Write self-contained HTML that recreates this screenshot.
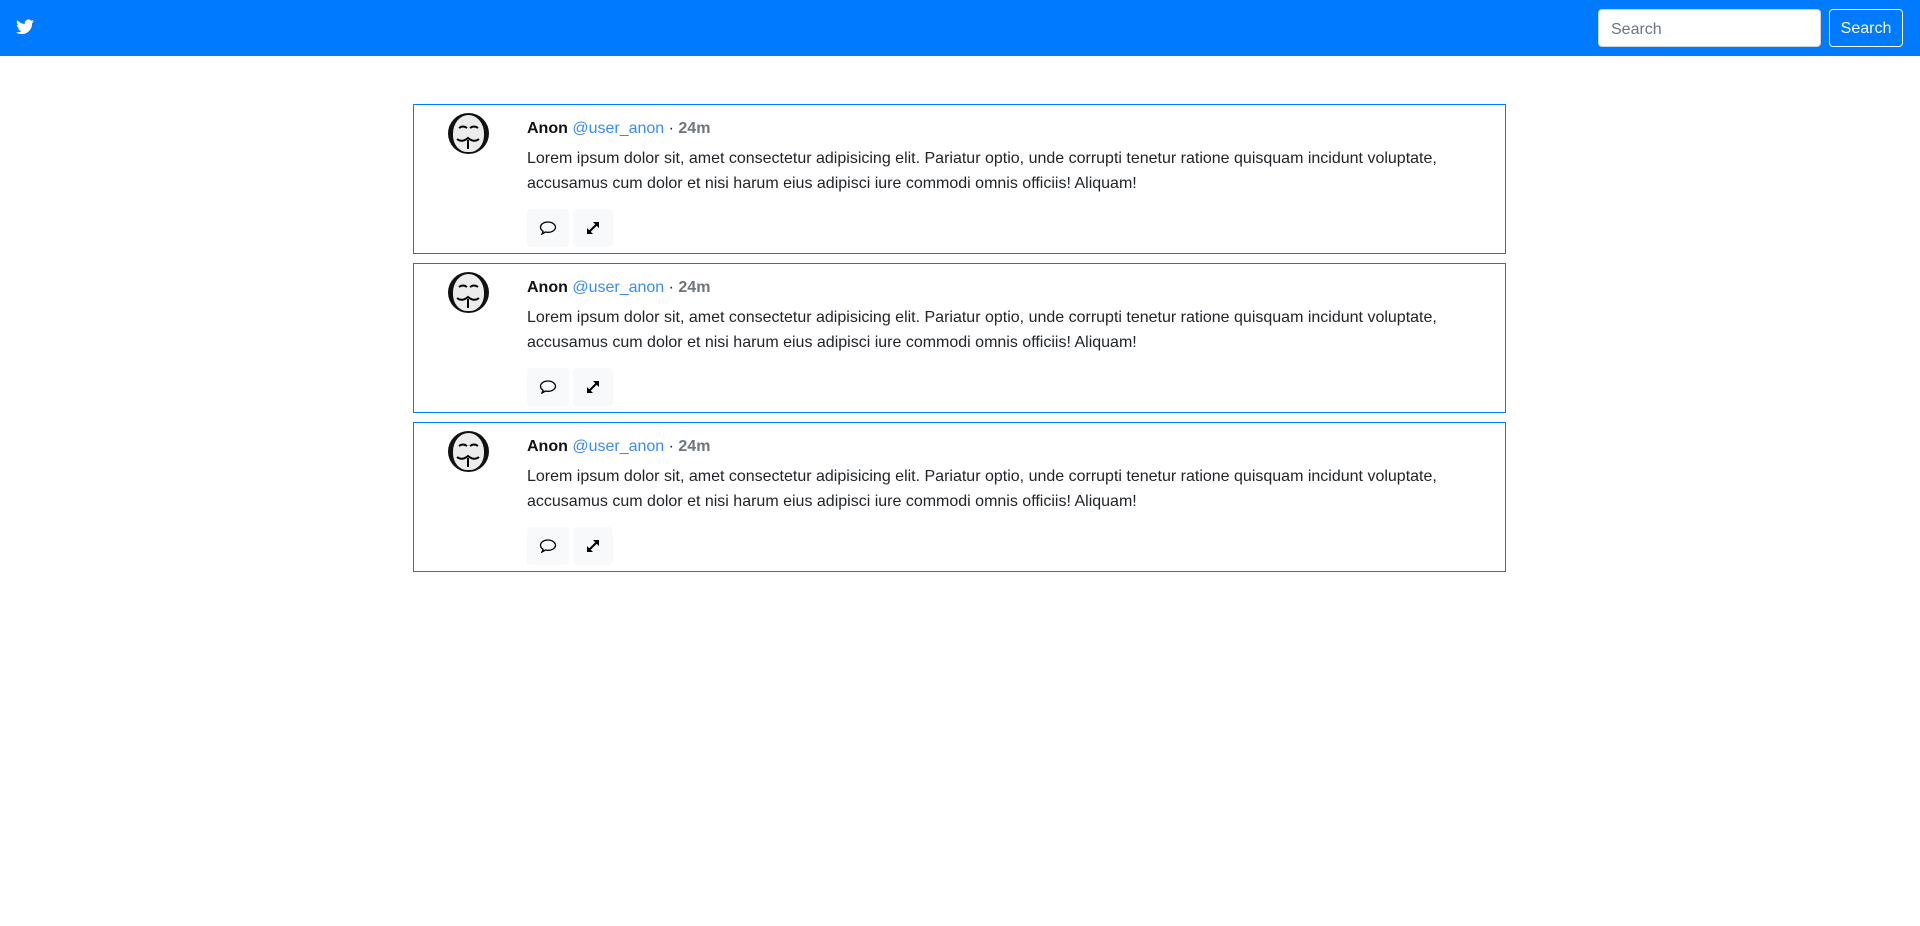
<!DOCTYPE html>
<html><head><meta charset="utf-8"><style>
*{box-sizing:border-box;margin:0;padding:0}
body{width:1920px;height:926px;background:#fff;font-family:"Liberation Sans",sans-serif;color:#212529;font-size:16px;overflow:hidden}
.nav{height:56px;background:#007bff;position:relative}
.logo{position:absolute;left:16px;top:19px}
.inp{position:absolute;left:1598px;top:9px;width:223px;height:38px;background:#fff;border:1px solid #ced4da;border-radius:4px;color:#6c757d;padding:10px 12px 0;font-size:16px;line-height:20px}
.btn{position:absolute;left:1829px;top:9px;width:74px;height:38px;border:1px solid #f8f9fa;border-radius:4px;color:#f8f9fa;text-align:center;line-height:38px;font-size:16px}
.card{position:absolute;left:413px;width:1093px;height:150px;border:1px solid #007bff}
.av{position:absolute;left:34px;top:8px;width:41px;height:41px;border-radius:50%;background:#111;overflow:hidden}
.av .f{position:absolute;left:5px;top:2px;width:31px;height:37px;background:#ececec;border-radius:50% 50% 45% 45%}
.body{position:absolute;left:113px;top:12px;width:960px}
.hd{font-size:16px;line-height:24px}
.hd b{color:#111}.hd .u{color:#3b8cf5}.hd .t{color:#6c757d;font-weight:bold}
.tx{margin-top:5px;line-height:25px;font-size:16px}
.acts{margin-top:13px;display:flex;gap:4px}
.ab{width:42px;height:38px;background:#f8f9fa;border-radius:4px;display:flex;align-items:center;justify-content:center}
.ab+.ab{width:40px}
</style></head><body>
<div class="nav">
<svg class="logo" width="18" height="16" viewBox="0 0 24 20"><path fill="#fff" d="M24 2.4a9.8 9.8 0 0 1-2.8.8A4.9 4.9 0 0 0 23.3.4a9.8 9.8 0 0 1-3.1 1.2A4.9 4.9 0 0 0 11.8 6 14 14 0 0 1 1.7.9a4.9 4.9 0 0 0 1.5 6.6 4.9 4.9 0 0 1-2.2-.6 4.9 4.9 0 0 0 3.9 4.9 4.9 4.9 0 0 1-2.2.1 4.9 4.9 0 0 0 4.6 3.4A9.9 9.9 0 0 1 0 17.3 14 14 0 0 0 7.5 19.5c9.1 0 14-7.5 14-14v-.6A10 10 0 0 0 24 2.4z"/></svg>
<div class="inp">Search</div>
<div class="btn">Search</div>
</div>
<div class="card" style="top:104px">
<div class="av"><div class="f"></div><svg style="position:absolute;left:0;top:0" width="41" height="41"><path d="M11 15q4-3 8 0M22 15q4-3 8 0" stroke="#000" stroke-width="2" fill="none"/><path d="M9 26q5 4 11-1q6 5 11 1" stroke="#000" stroke-width="2" fill="none"/><path d="M20 27v9" stroke="#000" stroke-width="2"/></svg></div>
<div class="body"><div class="hd"><b>Anon</b> <span class="u">@user_anon</span> · <span class="t">24m</span></div>
<div class="tx">Lorem ipsum dolor sit, amet consectetur adipisicing elit. Pariatur optio, unde corrupti tenetur ratione quisquam incidunt voluptate, accusamus cum dolor et nisi harum eius adipisci iure commodi omnis officiis! Aliquam!</div>
<div class="acts"><div class="ab"><svg width="18" height="14" viewBox="0 0 18 14"><path d="M9 1C4.5 1 1.5 3.5 1.5 6.3c0 1.6 1 3 2.6 4L3 13l3.5-2c.8.2 1.6.3 2.5.3 4.5 0 7.5-2.5 7.5-5S13.5 1 9 1z" fill="none" stroke="#000" stroke-width="1.3"/></svg></div><div class="ab"><svg width="14" height="14" viewBox="0 0 14 14"><path d="M3 11L11 3" stroke="#000" stroke-width="2"/><path d="M7 1h6v6zM1 7v6h6z" fill="#000"/></svg></div></div></div>
</div>
<div class="card" style="top:263px">
<div class="av"><div class="f"></div><svg style="position:absolute;left:0;top:0" width="41" height="41"><path d="M11 15q4-3 8 0M22 15q4-3 8 0" stroke="#000" stroke-width="2" fill="none"/><path d="M9 26q5 4 11-1q6 5 11 1" stroke="#000" stroke-width="2" fill="none"/><path d="M20 27v9" stroke="#000" stroke-width="2"/></svg></div>
<div class="body"><div class="hd"><b>Anon</b> <span class="u">@user_anon</span> · <span class="t">24m</span></div>
<div class="tx">Lorem ipsum dolor sit, amet consectetur adipisicing elit. Pariatur optio, unde corrupti tenetur ratione quisquam incidunt voluptate, accusamus cum dolor et nisi harum eius adipisci iure commodi omnis officiis! Aliquam!</div>
<div class="acts"><div class="ab"><svg width="18" height="14" viewBox="0 0 18 14"><path d="M9 1C4.5 1 1.5 3.5 1.5 6.3c0 1.6 1 3 2.6 4L3 13l3.5-2c.8.2 1.6.3 2.5.3 4.5 0 7.5-2.5 7.5-5S13.5 1 9 1z" fill="none" stroke="#000" stroke-width="1.3"/></svg></div><div class="ab"><svg width="14" height="14" viewBox="0 0 14 14"><path d="M3 11L11 3" stroke="#000" stroke-width="2"/><path d="M7 1h6v6zM1 7v6h6z" fill="#000"/></svg></div></div></div>
</div>
<div class="card" style="top:422px">
<div class="av"><div class="f"></div><svg style="position:absolute;left:0;top:0" width="41" height="41"><path d="M11 15q4-3 8 0M22 15q4-3 8 0" stroke="#000" stroke-width="2" fill="none"/><path d="M9 26q5 4 11-1q6 5 11 1" stroke="#000" stroke-width="2" fill="none"/><path d="M20 27v9" stroke="#000" stroke-width="2"/></svg></div>
<div class="body"><div class="hd"><b>Anon</b> <span class="u">@user_anon</span> · <span class="t">24m</span></div>
<div class="tx">Lorem ipsum dolor sit, amet consectetur adipisicing elit. Pariatur optio, unde corrupti tenetur ratione quisquam incidunt voluptate, accusamus cum dolor et nisi harum eius adipisci iure commodi omnis officiis! Aliquam!</div>
<div class="acts"><div class="ab"><svg width="18" height="14" viewBox="0 0 18 14"><path d="M9 1C4.5 1 1.5 3.5 1.5 6.3c0 1.6 1 3 2.6 4L3 13l3.5-2c.8.2 1.6.3 2.5.3 4.5 0 7.5-2.5 7.5-5S13.5 1 9 1z" fill="none" stroke="#000" stroke-width="1.3"/></svg></div><div class="ab"><svg width="14" height="14" viewBox="0 0 14 14"><path d="M3 11L11 3" stroke="#000" stroke-width="2"/><path d="M7 1h6v6zM1 7v6h6z" fill="#000"/></svg></div></div></div>
</div>
</body></html>
